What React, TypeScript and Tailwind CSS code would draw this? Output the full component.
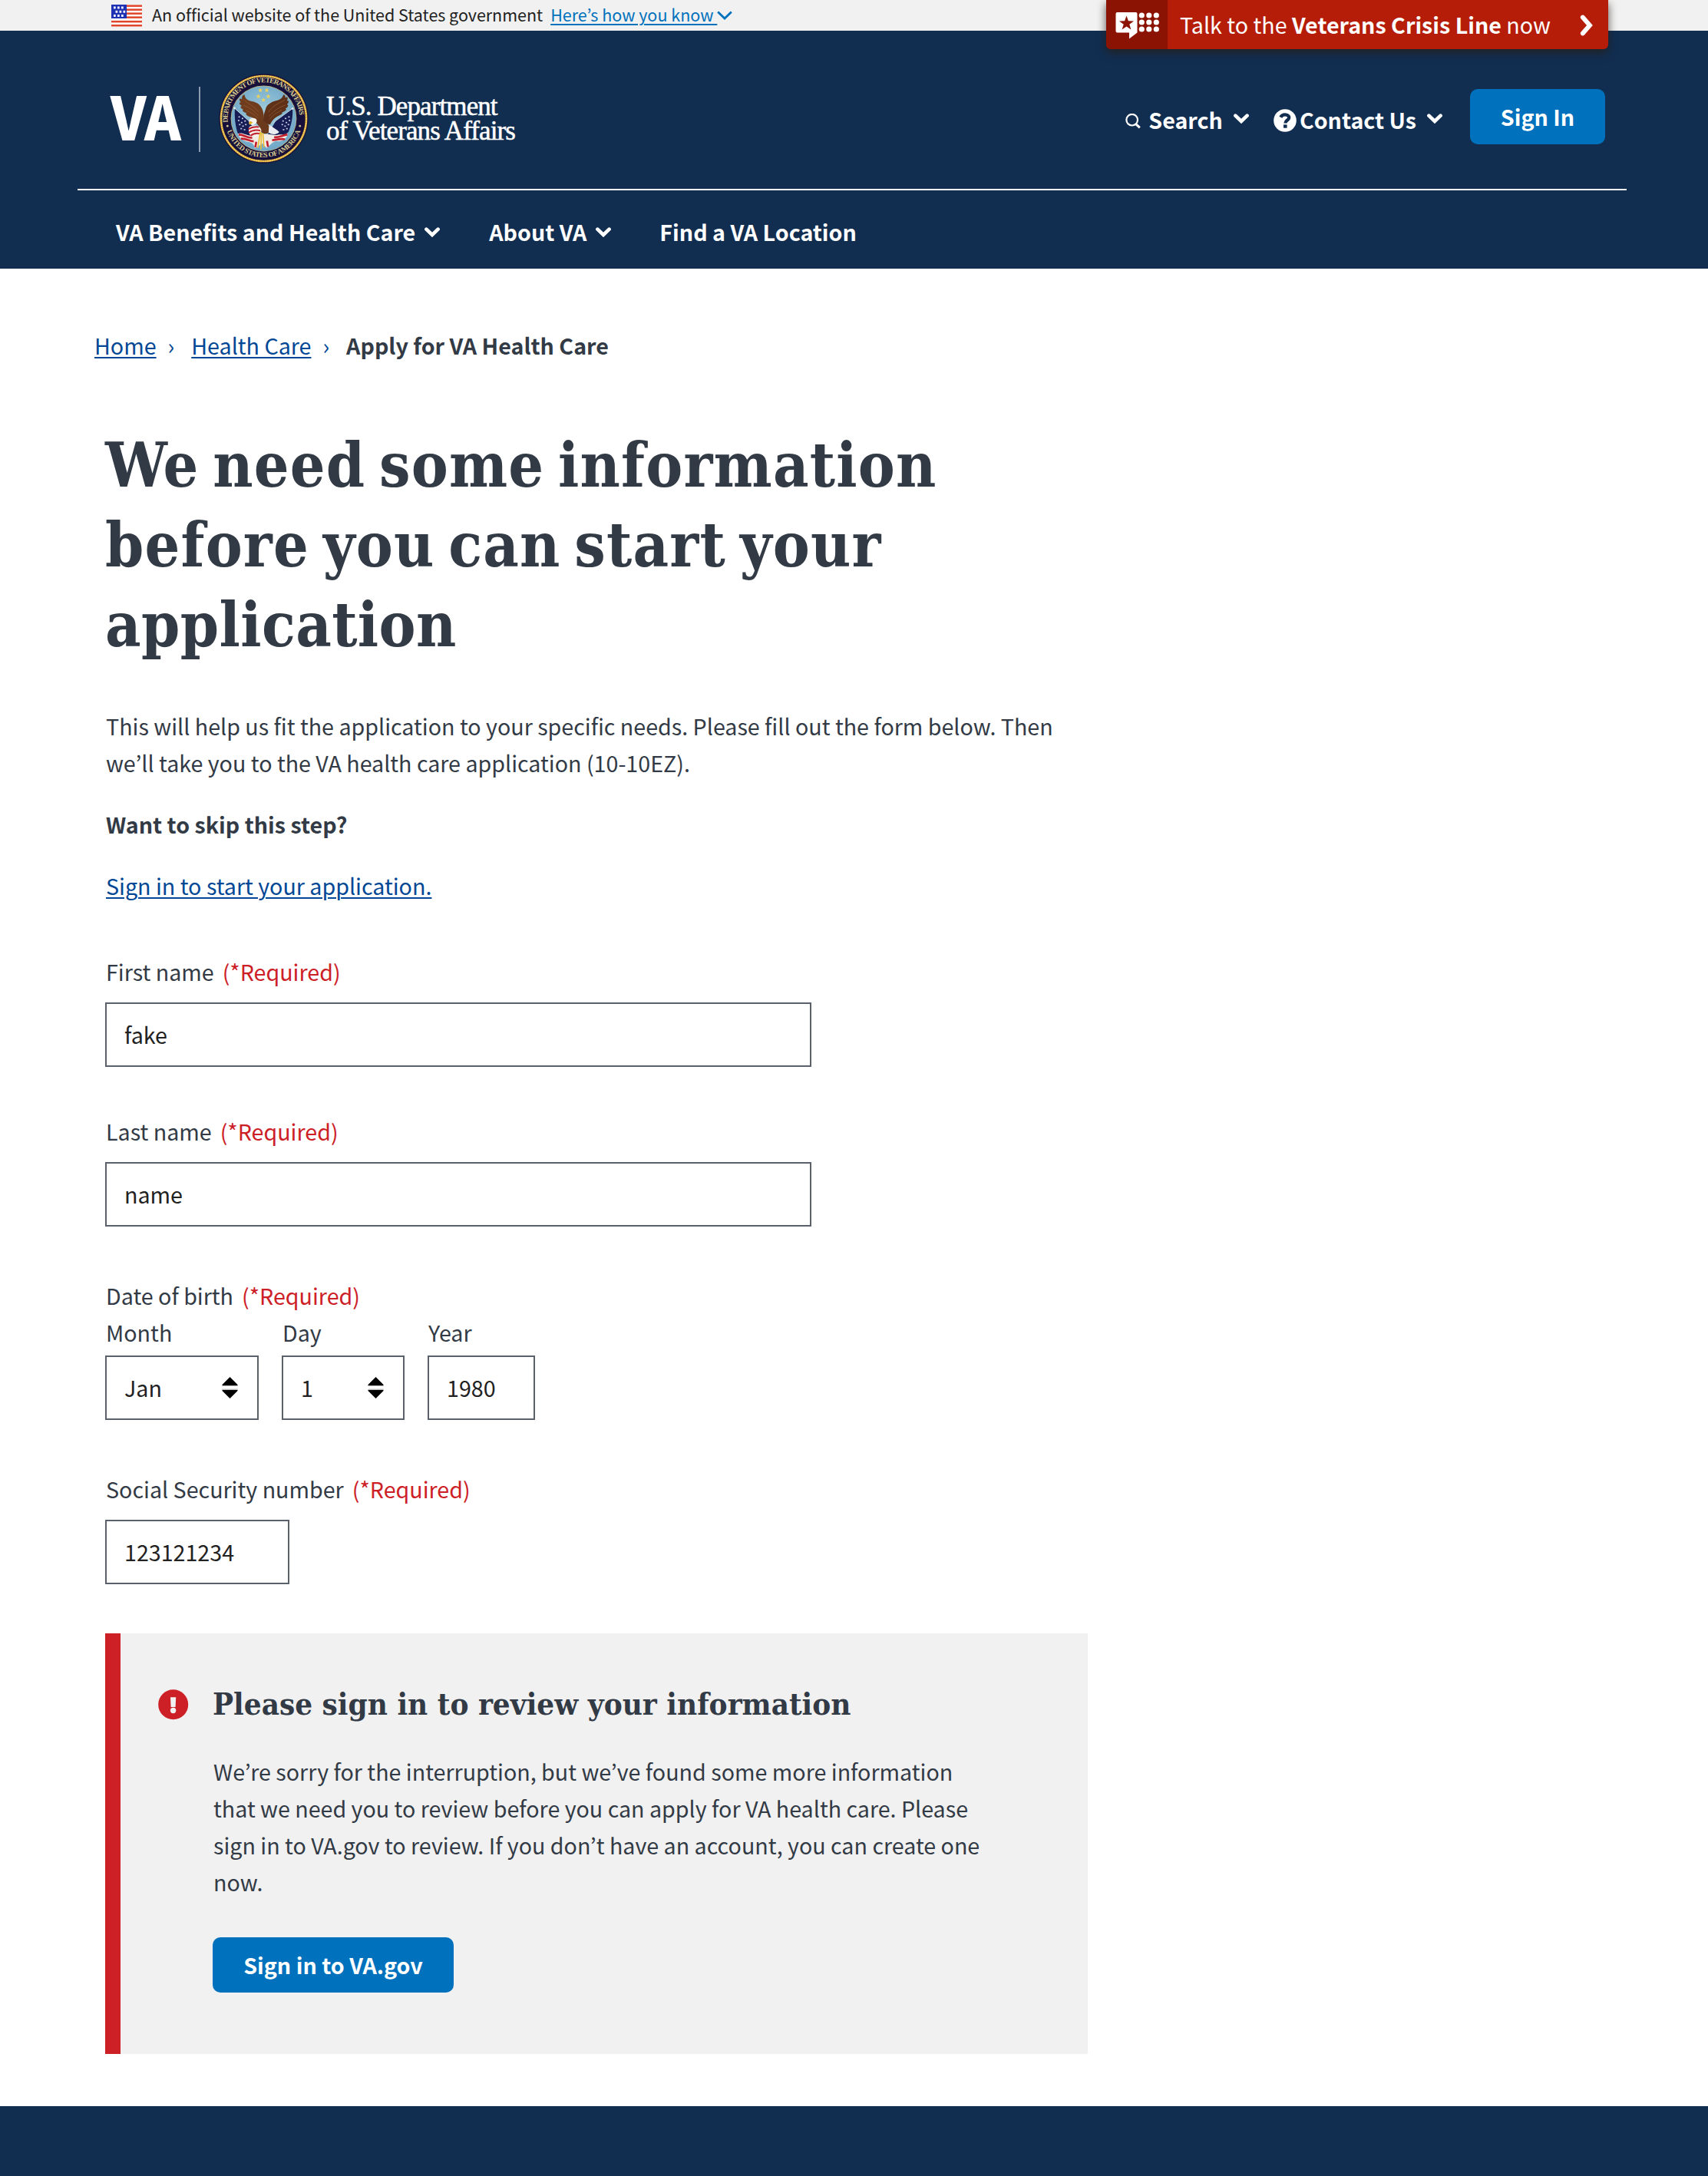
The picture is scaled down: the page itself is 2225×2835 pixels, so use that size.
import type { ReactNode } from "react";

const body = "font-['Noto_Sans_CJK_KR','Open_Sans',sans-serif] text-[28.65px] leading-[48px]";
const slab = "font-['DejaVu_Serif_Condensed','DejaVu_Serif',serif] font-bold text-[#323a45]";

function Chevron({ className }: { className?: string }) {
  return (
    <svg viewBox="0 0 20 13" className={`h-[13px] w-5 shrink-0 ${className ?? ""}`} fill="none">
      <path d="M2.4 2.6 L10 10 L17.6 2.6" stroke="currentColor" strokeWidth="4.6" strokeLinejoin="miter" strokeLinecap="round" />
    </svg>
  );
}

function Flag() {
  const stars = [
    [3, 2.5], [8, 2.5], [13, 2.5],
    [5.5, 7.8], [10.5, 7.8], [15.5, 7.8],
    [3, 13], [8, 13], [13, 13],
  ];
  return (
    <svg viewBox="0 0 40 29" className="h-[29px] w-10 shrink-0">
      <rect width="40" height="29" fill="#fff" />
      {[0, 5, 10, 15, 20.5, 25.6].map((y) => (
        <rect key={y} y={y + 0.4} width="40" height="2.5" fill="#e0452b" />
      ))}
      <rect width="20" height="18" fill="#2032b4" />
      {stars.map(([x, y]) => (
        <rect key={`${x}-${y}`} x={x} y={y} width="2.7" height="2.9" fill="#fff" />
      ))}
    </svg>
  );
}

function Star({ x, y, r, fill }: { x: number; y: number; r: number; fill: string }) {
  const pts = Array.from({ length: 10 }, (_, i) => {
    const a = (Math.PI / 5) * i - Math.PI / 2;
    const k = i % 2 ? r * 0.4 : r;
    return `${(x + k * Math.cos(a)).toFixed(2)},${(y + k * Math.sin(a)).toFixed(2)}`;
  }).join(" ");
  return <polygon points={pts} fill={fill} />;
}

function Seal() {
  const flagStars = [
    [152, 216], [165, 222], [150, 230], [162, 238], [175, 232], [154, 246], [167, 252], [178, 246], [160, 262], [173, 266],
  ];
  return (
    <svg viewBox="75 49 352 352" className="h-[117px] w-[117px] shrink-0">
      <defs>
        <path id="ring-top" d="M 111.5 244 A 141 141 0 1 1 390.5 244" />
        <path id="ring-bottom" d="M 99 225 A 152 152 0 0 0 403 225" />
        <radialGradient id="sky" cx="50%" cy="45%" r="60%">
          <stop offset="0" stopColor="#a5cfe0" />
          <stop offset="1" stopColor="#6aa3c4" />
        </radialGradient>
      </defs>
      <circle cx="251" cy="225" r="175" fill="#17103a" />
      <circle cx="251" cy="225" r="167" fill="none" stroke="#dba936" strokeWidth="8" />
      <circle cx="251" cy="225" r="167" fill="none" stroke="#f4dc7a" strokeWidth="4" strokeDasharray="5 4" />
      <circle cx="251" cy="225" r="129" fill="#c9b777" />
      <circle cx="251" cy="225" r="127" fill="url(#sky)" />
      <g fill="#d9cd92" fontFamily="'Liberation Serif', serif" fontWeight="700" fontSize="28">
        <text>
          <textPath href="#ring-top" startOffset="4" textLength="448" lengthAdjust="spacing">DEPARTMENT OF VETERANS AFFAIRS</textPath>
        </text>
        <text>
          <textPath href="#ring-bottom" startOffset="50" textLength="378" lengthAdjust="spacing">UNITED STATES OF AMERICA</textPath>
        </text>
      </g>
      <circle cx="109" cy="254" r="4" fill="#d9cd92" />
      <circle cx="393" cy="254" r="4" fill="#d9cd92" />

      {/* constellation above the eagle */}
      {[[238, 114], [263, 114], [230, 138], [269, 138], [250, 152]].map(([x, y]) => (
        <Star key={`${x}${y}`} x={x} y={y} r={10} fill="#ecd25c" />
      ))}

      {/* draped flags */}
      <path d="M138 186 L198 238 L222 290 L205 312 C186 298 166 296 150 284 C140 256 136 222 138 186Z" fill="#161d55" />
      <path d="M364 186 L300 232 L268 286 L290 306 C312 292 330 294 348 278 C360 250 366 218 364 186Z" fill="#161d55" />
      <path d="M150 284 C168 278 180 290 200 292 L246 284 L300 290 C318 284 330 292 346 284 C340 308 318 318 300 312 C280 318 274 334 262 340 L246 322 L216 342 C214 326 206 318 188 316 C168 312 156 302 150 284Z" fill="#f1ece6" />
      <g fill="none" stroke="#c2202f" strokeWidth="8">
        <path d="M153 288 C174 288 186 302 206 300" />
        <path d="M162 304 C182 302 196 314 212 314" />
        <path d="M344 288 C324 290 312 300 292 298" />
        <path d="M334 306 C316 302 302 308 284 310" />
        <path d="M222 316 L218 338" />
        <path d="M264 312 L268 336" />
      </g>
      {flagStars.map(([x, y]) => (
        <rect key={`l${x}${y}`} x={x} y={y} width="6" height="5" fill="#c9cfe6" />
      ))}
      {flagStars.map(([x, y]) => (
        <rect key={`r${x}${y}`} x={499 - x} y={y} width="6" height="5" fill="#c9cfe6" />
      ))}
      <path d="M134 182 L204 244 M366 184 L290 240" stroke="#c7d6dd" strokeWidth="3" />
      <circle cx="137" cy="184" r="4" fill="#e9eef0" />
      <circle cx="364" cy="186" r="4" fill="#e9eef0" />

      {/* wings */}
      <path d="M176 132 C178 148 190 156 208 158 C226 162 240 172 246 190 C252 206 254 222 248 240 L226 236 C214 226 206 218 196 218 C184 214 178 206 184 204 C170 200 164 192 172 190 C160 186 156 176 166 176 C154 168 152 160 162 162 C152 152 156 142 166 150 C164 140 168 132 176 132Z" fill="#6f3c1e" />
      <path d="M328 132 C324 148 312 152 296 156 C276 162 262 172 258 190 C252 206 248 222 250 244 L276 248 C284 232 294 222 306 216 C318 210 328 206 322 202 C336 196 344 190 336 186 C348 180 350 170 342 170 C352 160 350 152 342 156 C348 144 344 136 336 144 C336 134 332 130 328 132Z" fill="#5f3118" />
      <g fill="none" stroke="#8f5830" strokeWidth="2.5">
        <path d="M172 150 C190 168 214 176 232 200 M172 172 C192 182 210 190 230 214 M182 194 C200 200 214 208 228 224" />
        <path d="M334 152 C312 164 286 174 270 200 M336 172 C314 180 292 192 272 216 M322 192 C304 200 288 210 274 228" />
      </g>
      {/* body and head */}
      <path d="M214 228 C226 224 250 230 266 246 C278 256 280 272 268 282 C254 288 240 282 238 266 C236 254 222 246 214 228Z" fill="#6b3a1d" />
      <path d="M196 228 C204 220 222 222 224 232 C226 242 214 252 204 250 C196 248 190 238 196 228Z" fill="#f7f5ef" />
      <path d="M202 236 C194 234 190 242 196 250 C200 246 206 244 208 240Z" fill="#e3b22d" />
      <path d="M272 250 C286 258 302 268 312 278 C304 288 286 290 270 280Z" fill="#e9edf1" />

      {/* shield */}
      <path d="M194 258 C208 248 232 248 242 270 C238 290 226 300 212 298 C198 294 188 280 194 258Z" fill="#f4efe9" />
      <g fill="none" stroke="#c2202f" strokeWidth="6">
        <path d="M192 266 C204 258 220 256 232 258" />
        <path d="M192 280 C206 270 222 268 238 272" />
        <path d="M200 292 C212 282 226 282 236 284" />
      </g>
      <g fill="none" stroke="#e8bd34" strokeWidth="5">
        <path d="M238 276 L228 340 M242 280 L240 346 M248 282 L252 338" />
      </g>
    </svg>
  );
}

function CrisisIcon() {
  return (
    <svg viewBox="0 0 57 36" className="h-9 w-[57px]">
      <path d="M2.5 1 H26.5 A2 2 0 0 1 28.5 3 V27.5 L18 35.5 V27.5 H2.5 A2 2 0 0 1 0.5 25.5 V3 A2 2 0 0 1 2.5 1Z" fill="#fff" />
      <Star x={14.5} y={15.5} r={10} fill="#8b1303" />
      {[5, 14, 23].map((y) =>
        [34.3, 43.8, 53.3].map((x) => <circle key={`${x}${y}`} cx={x} cy={y} r="3.6" fill="#fff" />),
      )}
    </svg>
  );
}

function Label({ children }: { children: ReactNode }) {
  return (
    <div className="flex pl-[1px] text-[#323a45]">
      <span>{children}</span>
      <span className="ml-[11px] text-[#cd2026]">(*Required)</span>
    </div>
  );
}

function TextField({ value, label, className }: { value: string; label: string; className: string }) {
  return (
    <input
      aria-label={label}
      defaultValue={value}
      className={`block h-[84px] border-2 border-[#5b616b] bg-white pb-[2px] pl-[23px] text-[#212121] outline-none ${className}`}
    />
  );
}

function SelectField({ label, value, className }: { label: string; value: string; className: string }) {
  return (
    <div className={className}>
      <div className="pl-[1px] text-[#323a45]">{label}</div>
      <div className="mt-[6px] flex h-[84px] items-center justify-between border-2 border-[#5b616b] bg-white pr-[25px] pl-[23px] text-[#212121]">
        <span>{value}</span>
        <svg viewBox="0 0 21 28" className="-mt-[1px] h-7 w-[21px]">
          <path d="M10.5 0 L20.5 10 V11.3 H0.5 V10Z" fill="#000" />
          <path d="M10.5 28 L20.5 18 V16.7 H0.5 V18Z" fill="#000" />
          <path d="M0.5 11.6 H20.5 M0.5 16 H20.5" stroke="#b5b5b5" strokeWidth="0.8" />
        </svg>
      </div>
    </div>
  );
}

export default function App() {
  return (
    <div className={`relative min-h-[2835px] w-[2225px] bg-white ${body}`}>
      {/* Government banner */}
      <div className="flex h-10 items-start bg-[#f1f1f1] pl-[145px] text-[21.5px] leading-[37px] text-[#212121]">
        <div className="pt-[6px]"><Flag /></div>
        <span className="ml-[13px] tracking-[-0.02px]">An official website of the United States government</span>
        <a className="ml-[10px] whitespace-pre text-[#0071bc] underline decoration-2 underline-offset-[3px]">Here’s how you know </a>
        <svg viewBox="0 0 20 12" className="mt-[14px] h-3 w-5 text-[#0071bc]" fill="none">
          <path d="M1.2 1.5 L10 10 L18.8 1.5" stroke="currentColor" strokeWidth="2.8" />
        </svg>
      </div>

      {/* Crisis line tab hanging over the header */}
      <div className="absolute top-0 left-[1441px] flex h-16 w-[654px] overflow-visible rounded-b-md bg-[#b51d09] text-white shadow-[0_5px_12px_rgba(40,30,20,0.75)]">
        <div className="flex w-20 justify-start rounded-bl-md bg-[#8b1303] pt-[15px] pl-3"><CrisisIcon /></div>
        <span className="ml-4 whitespace-pre leading-[64px]">Talk to the <b className="font-bold">Veterans Crisis Line</b> now</span>
        <svg viewBox="0 0 18 28" className="mt-[19px] ml-auto mr-[19px] h-7 w-[18px]" fill="none">
          <path d="M3.8 3.5 L13 14 L3.8 24.5" stroke="#fff" strokeWidth="5.8" strokeLinecap="round" />
        </svg>
      </div>

      {/* Header */}
      <header className="h-[310px] bg-[#112e51] text-white">
        <div className="mx-[101px] flex h-[208px] w-[2018px] items-start border-b-2 border-white pr-7 pl-[43px]">
          <div className="mt-[56px] flex h-[117px] items-start">
            <div className="mt-[13px] w-[115px] origin-left scale-x-[0.93] text-[78px] leading-[80px] font-black tracking-[-1px]">VA</div>
            <div className="mt-[17px] h-[85px] w-[2px] bg-[#8d9bb0]" />
            <div className="ml-[24px]"><Seal /></div>
            <div className="mt-[27px] ml-[23px] font-['Liberation_Serif',serif] text-[35px] leading-[32px] tracking-[-0.9px] whitespace-nowrap [-webkit-text-stroke:0.5px_white]">
              U.S. Department
              <br />
              of Veterans Affairs
            </div>
          </div>

          <div className="ml-auto flex items-start font-bold">
            <div className="mt-[92px] flex">
              <svg viewBox="0 0 20 20" className="mt-[16px] h-5 w-5" fill="none" stroke="#fff">
                <circle cx="8.7" cy="8.2" r="7.3" strokeWidth="2.2" />
                <path d="M13.7 13.6 L18.8 18.4" strokeWidth="3" />
              </svg>
              <span className="ml-[10px]">Search</span>
              <Chevron className="mt-[16px] ml-[14px]" />
            </div>
            <div className="mt-[92px] ml-8 flex">
              <svg viewBox="0 0 30 30" className="mt-[10px] h-[30px] w-[30px]">
                <circle cx="15" cy="15" r="14.8" fill="#fff" />
                <path d="M9.3 10.8 C10.5 8.4 12.5 7.4 15 7.4 C18 7.4 20.2 9 20.2 11.3 C20.2 14.6 15.4 14.6 15.4 18.6" fill="none" stroke="#112e51" strokeWidth="4.3" />
                <rect x="13" y="20.4" width="4.6" height="4.3" fill="#112e51" />
              </svg>
              <span className="ml-1">Contact Us</span>
              <Chevron className="mt-[16px] ml-[14px]" />
            </div>
            <button className="mt-[76px] ml-9 h-[72px] w-[176px] rounded-[10px] bg-[#0071bc] font-bold">Sign In</button>
          </div>
        </div>
        <nav className="flex pt-[30px] pl-[151px] font-bold">
          <span>VA Benefits and Health Care</span>
          <Chevron className="mt-[18px] ml-3" />
          <span className="ml-16">About VA</span>
          <Chevron className="mt-[18px] ml-3" />
          <span className="ml-[63px]">Find a VA Location</span>
        </nav>
      </header>

      {/* Breadcrumb */}
      <div className="flex pt-[76px] pl-[123px] text-[#004795]">
        <a className="underline decoration-2 underline-offset-[3px]">Home</a>
        <span className="ml-[15px]">›</span>
        <a className="ml-[22px] underline decoration-2 underline-offset-[3px]">Health Care</a>
        <span className="ml-[15px]">›</span>
        <span className="ml-[22px] font-bold text-[#323a45]">Apply for VA Health Care</span>
      </div>

      <main className="w-[1417px] pl-[137px]">
        <h1 className={`mt-20 text-[80px] leading-[104px] whitespace-nowrap ${slab}`}>
          <span className="tracking-[1.2px] [word-spacing:-8.5px]">We need some information</span>
          <br />
          <span className="tracking-[1.2px] [word-spacing:-8.5px]">before you can start your</span>
          <br />
          <span className="tracking-[0.4px]">application</span>
        </h1>
        <p className="mt-14 pl-[1px] whitespace-nowrap text-[#323a45]">
          This will help us fit the application to your specific needs. Please fill out the form below. Then
          <br />
          we’ll take you to the VA health care application (10-10EZ).
        </p>
        <p className="mt-8 pl-[1px] font-bold text-[#323a45]">Want to skip this step?</p>
        <p className="mt-8 pl-[1px]">
          <a className="text-[#004795] underline decoration-2 underline-offset-[3px]">Sign in to start your application.</a>
        </p>

        <div className="mt-16">
          <Label>First name</Label>
          <TextField label="First name" value="fake" className="mt-4 w-[920px]" />
        </div>
        <div className="mt-[60px]">
          <Label>Last name</Label>
          <TextField label="Last name" value="name" className="mt-4 w-[920px]" />
        </div>
        <div className="mt-[66px]">
          <Label>Date of birth</Label>
          <div className="flex gap-[30px]">
            <SelectField label="Month" value="Jan" className="w-[200px]" />
            <SelectField label="Day" value="1" className="w-[160px]" />
            <div>
              <div className="pl-[1px] text-[#323a45]">Year</div>
              <TextField label="Year" value="1980" className="mt-[6px] w-[140px]" />
            </div>
          </div>
        </div>
        <div className="mt-[66px]">
          <Label>Social Security number</Label>
          <TextField label="Social Security number" value="123121234" className="mt-4 w-[240px]" />
        </div>

        <section className="mt-16 flex h-[548px] border-l-[20px] border-[#cd2026] bg-[#f1f1f1] pl-[49px]">
          <svg viewBox="0 0 40 40" className="mt-[73px] h-10 w-10 shrink-0">
            <circle cx="19.7" cy="19.7" r="19.5" fill="#cd2026" />
            <path d="M16 10.3 H23.2 L22.6 22.9 H16.6Z" fill="#f1f1f1" />
            <circle cx="19.6" cy="27.5" r="3.7" fill="#f1f1f1" />
          </svg>
          <div className="ml-[31px] pt-[66px]">
            <h3 className={`text-[40px] leading-[52px] whitespace-nowrap ${slab}`}>Please sign in to review your information</h3>
            <p className="mt-[38px] pl-[1px] whitespace-nowrap text-[#323a45]">
              We’re sorry for the interruption, but we’ve found some more information
              <br />
              that we need you to review before you can apply for VA health care. Please
              <br />
              sign in to VA.gov to review. If you don’t have an account, you can create one
              <br />
              now.
            </p>
            <button className="mt-[48px] h-[72px] w-[314px] rounded-[10px] bg-[#0071bc] font-bold text-white">Sign in to VA.gov</button>
          </div>
        </section>
      </main>

      <footer className="mt-[68px] h-[91px] bg-[#112e51]" />
    </div>
  );
}
